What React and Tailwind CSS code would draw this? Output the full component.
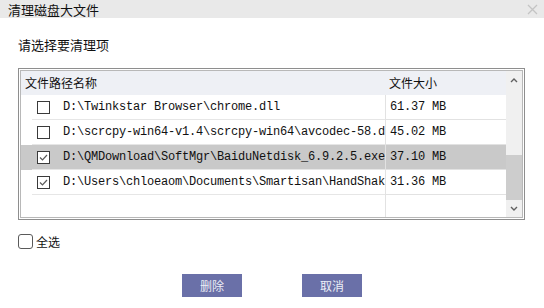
import React from "react";

const rows = [
  { path: "D:\\Twinkstar Browser\\chrome.dll", size: "61.37 MB", checked: false },
  { path: "D:\\scrcpy-win64-v1.4\\scrcpy-win64\\avcodec-58.dll", size: "45.02 MB", checked: false },
  { path: "D:\\QMDownload\\SoftMgr\\BaiduNetdisk_6.9.2.5.exe", size: "37.10 MB", checked: true, selected: true },
  { path: "D:\\Users\\chloeaom\\Documents\\Smartisan\\HandShaker.exe", size: "31.36 MB", checked: true },
];

const cjk = "font-['Noto_Sans_CJK_SC',_'Noto_Sans',_sans-serif]";
const mono = "font-['Liberation_Mono',_'Noto_Sans_CJK_SC',_monospace]";

const RowCheck = ({ checked }) => (
  <div className="w-[13px] h-[13px] border border-[#3a3a3a] bg-white flex items-center justify-center shrink-0">
    {checked && (
      <svg width="11" height="11" viewBox="0 0 11 11">
        <polyline points="2,5.5 4.5,8 9,3" fill="none" stroke="#5a5a5a" strokeWidth="1.2" />
      </svg>
    )}
  </div>
);

const Chevron = ({ up }) => (
  <svg width="8" height="6" viewBox="0 0 8 6">
    <polyline
      points={up ? "1,5 4,2 7,5" : "1,1 4,4 7,1"}
      fill="none"
      stroke="#606060"
      strokeWidth="1.4"
    />
  </svg>
);

export default function App() {
  return (
    <div className={`w-[544px] h-[308px] bg-white overflow-hidden text-[#111] ${cjk}`}>
      {/* Title bar */}
      <div className="h-[18px] bg-[#e9e9e9] flex items-center justify-between pl-[8px] pr-[6px]">
        <span className="text-[13px] leading-none">清理磁盘大文件</span>
        <svg width="11" height="11" viewBox="0 0 11 11">
          <path d="M1 1 L10 10 M10 1 L1 10" stroke="#c4c4c4" strokeWidth="1.3" />
        </svg>
      </div>

      <div className="px-[18px]">
        <div className="mt-[19px] text-[13px] leading-[16px]">请选择要清理项</div>

        {/* File table */}
        <div className="mt-[15px] w-[507px] h-[152px] border border-[#8e8e8e] p-[1px]">
          <div className="w-full h-full border border-[#b8b8b8] flex">
            <div className="flex-1 flex flex-col">
              {/* Header */}
              <div className="h-[24px] bg-[#eef0f5] flex items-center text-[12px] shrink-0">
                <div className="w-[364px] pl-[4px]">文件路径名称</div>
                <div className="flex-1 pl-[4px]">文件大小</div>
              </div>

              {rows.map((r) => (
                <div
                  key={r.path}
                  className={`h-[25px] flex shrink-0 ${r.selected ? "bg-[#c9c9c9]" : ""}`}
                >
                  <div className="w-[364px] shrink-0 pl-[11px] h-full">
                    <div className="h-full flex items-center pl-[5px] border-b border-[#e6e6e6]">
                      <RowCheck checked={r.checked} />
                      <span
                        className={`ml-[13px] block flex-1 min-w-0 overflow-hidden whitespace-nowrap ${mono} text-[12px] tracking-[-0.2px]`}
                      >
                        {r.path}
                      </span>
                    </div>
                  </div>
                  <div className="flex-1 flex items-center border-l border-b border-[#e2e2e2] pl-[4px]">
                    <span className={`${mono} text-[12px] tracking-[-0.2px] whitespace-nowrap`}>{r.size}</span>
                  </div>
                </div>
              ))}

              <div className="flex-1 flex">
                <div className="w-[364px]" />
                <div className="flex-1 border-l border-[#e2e2e2]" />
              </div>
            </div>

            {/* Scrollbar */}
            <div className="w-[16px] bg-[#f0f0f0] flex flex-col">
              <div className="h-[17px] flex items-center justify-center">
                <Chevron up />
              </div>
              <div className="flex-1 flex flex-col justify-end">
                <div className="h-[45px] bg-[#cdcdcd]" />
              </div>
              <div className="h-[17px] flex items-center justify-center">
                <Chevron />
              </div>
            </div>
          </div>
        </div>

        {/* Select all */}
        <div className="mt-[14px] flex items-center">
          <div className="w-[15px] h-[15px] border border-[#5a5a5a] rounded-[3px] bg-white" />
          <span className="ml-[3px] text-[12px] leading-none">全选</span>
        </div>
      </div>

      {/* Buttons */}
      <div className="mt-[25px] flex justify-center gap-[60px]">
        <button className="w-[60px] h-[23px] bg-[#6a70a8] text-[#eceef6] text-[12px] leading-none">删除</button>
        <button className="w-[60px] h-[23px] bg-[#6a70a8] text-[#eceef6] text-[12px] leading-none">取消</button>
      </div>
    </div>
  );
}
